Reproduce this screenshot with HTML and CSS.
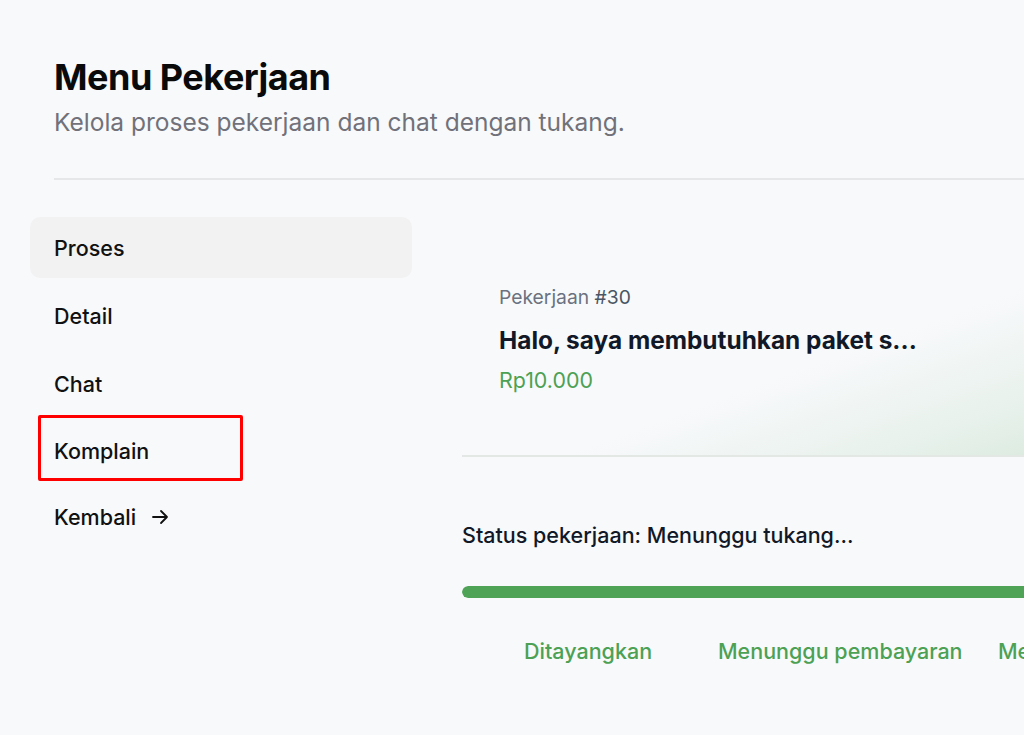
FILE: index.html
```html
<!DOCTYPE html>
<html lang="id">
<head>
<meta charset="utf-8">
<title>Menu Pekerjaan</title>
<link rel="stylesheet" href="styles.css">
</head>
<body>
<div class="page">
  <header class="header">
    <h1 class="title">Menu Pekerjaan</h1>
    <p class="subtitle">Kelola proses pekerjaan dan chat dengan tukang.</p>
  </header>
  <div class="layout">
    <nav class="sidebar">
      <a class="nav-item active">Proses</a>
      <a class="nav-item">Detail</a>
      <a class="nav-item">Chat</a>
      <a class="nav-item highlighted">Komplain</a>
      <a class="nav-item">Kembali <span class="arrow"><svg width="18" height="18" viewBox="0 0 18 18" fill="none" stroke="#111" stroke-width="1.8" stroke-linecap="round" stroke-linejoin="round"><path d="M2 9h14M10 3 16 9 10 15"/></svg></span></a>
    </nav>
    <main class="main">
      <section class="card">
        <div class="job-id">Pekerjaan <span class="num">#30</span></div>
        <div class="job-title">Halo, saya membutuhkan paket s...</div>
        <div class="job-price">Rp10.000</div>
      </section>
      <section class="status">
        <div class="status-text">Status pekerjaan: Menunggu tukang...</div>
        <div class="progress"><div class="bar"></div></div>
        <div class="steps">
          <span class="step s1">Ditayangkan</span>
          <span class="step s2">Menunggu pembayaran</span>
          <span class="step s3">Me</span>
        </div>
      </section>
    </main>
  </div>
</div>
</body>
</html>
```
FILE: styles.css
```css
* { box-sizing: border-box; }
html, body { margin: 0; padding: 0; }
body {
  background: #f8f9fb;
  font-family: Inter, "Noto Sans", sans-serif;
  color: #111;
  overflow: hidden;
  width: 1024px;
  height: 735px;
}
.page {
  width: 1400px;
  padding: 0 0 0 30px;
}
.header {
  margin-left: 24px;
  padding-top: 54px;
  padding-bottom: 40px;
  border-bottom: 2px solid #e6e7e9;
}
.title {
  margin: 0;
  font-size: 36px;
  font-weight: 700;
  letter-spacing: -0.5px;
  line-height: 46px;
  color: #0a0a0a;
}
.subtitle {
  margin: 6px 0 0;
  font-size: 24.5px;
  color: #71717a;
  line-height: 32px;
}
.layout {
  display: flex;
  gap: 50px;
  padding-top: 37px;
}
.sidebar {
  width: 382px;
  flex-shrink: 0;
  display: flex;
  flex-direction: column;
  gap: 7px;
}
.nav-item {
  display: flex;
  align-items: center;
  height: 61px;
  padding-left: 24px;
  font-size: 21.5px;
  font-weight: 500;
  color: #111;
  border-radius: 10px;
}
.nav-item.active { background: #f2f2f3; }
.nav-item.highlighted {
  margin-left: 8px;
  padding-left: 13px;
  padding-top: 5px;
  width: 205px;
  height: 66px;
  margin-top: -6px;
  margin-bottom: -2px;
  border: 3px solid #ff0000;
  border-radius: 2px;
}
.arrow { display: inline-flex; margin-left: 15px; }
.main {
  width: 800px;
  flex-shrink: 0;
}
.card {
  height: 240px;
  padding: 67px 37px 0;
  border-bottom: 2px solid #e3e8e4;
  background: linear-gradient(160deg, rgba(248,249,251,0) 52%, rgba(205,228,210,0.4) 75%, rgba(170,210,175,0.6) 100%);
}
.job-id {
  font-size: 19.3px;
  color: #6b7280;
  line-height: 26px;
}
.job-id .num { color: #4b5563; font-weight: 400; }
.job-title {
  margin-top: 14px;
  font-size: 24.4px;
  font-weight: 700;
  color: #111827;
  line-height: 32px;
}
.job-price {
  margin-top: 9px;
  font-size: 21.4px;
  color: #4ca154;
  line-height: 30px;
}
.status { padding-top: 63px; }
.status-text {
  font-size: 21.5px;
  font-weight: 500;
  color: #111827;
  line-height: 30px;
}
.progress {
  margin-top: 36px;
  height: 12px;
  border-radius: 6px;
  background: #e5e7eb;
  overflow: hidden;
}
.bar { width: 100%; height: 100%; background: #4ea356; border-radius: 6px; }
.steps {
  display: flex;
  padding-left: 62px;
  margin-top: 38px;
  font-size: 21.5px;
  font-weight: 500;
  color: #4ca154;
  line-height: 30px;
}
.step.s1 { width: 194px; }
.step.s2 { width: 280px; }
```
